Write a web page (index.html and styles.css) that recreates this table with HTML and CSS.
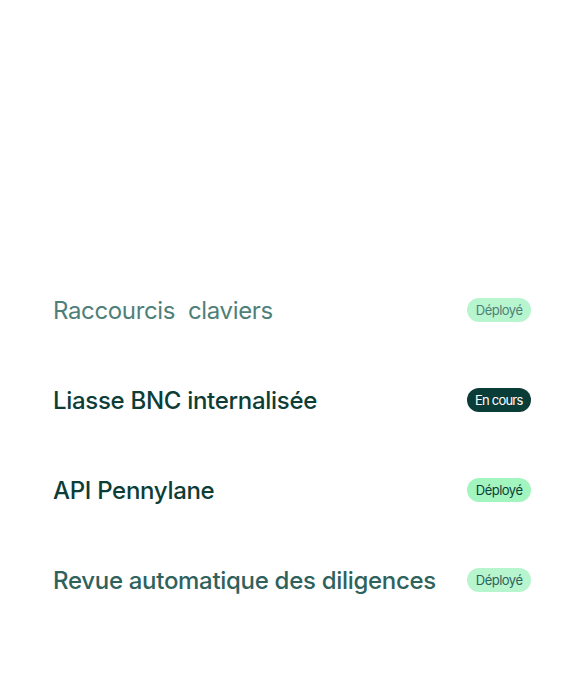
FILE: index.html
```html
<!DOCTYPE html>
<html lang="fr">
<head>
<meta charset="utf-8">
<link rel="stylesheet" href="styles.css">
</head>
<body>
<main class="list">
  <div class="row row-faded">
    <span class="title title-alt">Raccourcis&nbsp; claviers</span>
    <span class="badge badge-light">Déployé</span>
  </div>
  <div class="row">
    <span class="title">Liasse BNC internalisée</span>
    <span class="badge badge-dark">En cours</span>
  </div>
  <div class="row">
    <span class="title">API Pennylane</span>
    <span class="badge badge-green">Déployé</span>
  </div>
  <div class="row row-mid">
    <span class="title">Revue automatique des diligences</span>
    <span class="badge badge-light">Déployé</span>
  </div>
</main>
</body>
</html>
```
FILE: styles.css
```css
html, body {
  margin: 0;
  padding: 0;
  background: #ffffff;
}
body {
  width: 584px;
  height: 687px;
  font-family: Inter, "Noto Sans", sans-serif;
}
.list {
  display: flex;
  flex-direction: column;
  padding: 287px 53px 0 53px;
}
.row {
  height: 90px;
  display: flex;
  align-items: flex-start;
  justify-content: space-between;
  color: #0d3d37;
}
.title {
  font-size: 24px;
  font-weight: 500;
  letter-spacing: -0.3px;
  line-height: 48px;
}
.title-alt {
  font-weight: 400;
  letter-spacing: -0.35px;
}
.row-faded { color: #4f7f79; }
.row-mid { color: #2f625d; }
.badge {
  margin-top: 11px;
  height: 24px;
  padding: 0 8.5px;
  border-radius: 12px;
  font-size: 13px;
  font-weight: 400;
  line-height: 24px;
  letter-spacing: -0.5px;
}
.badge-light { background: #b6f5cd; color: #4f7f79; }
.row-mid .badge-light { color: #2f625d; }
.badge-green { background: #a3f5c0; color: #0d3d37; }
.badge-dark { background: #0b3d38; color: #ffffff; letter-spacing: -0.8px; }
```
